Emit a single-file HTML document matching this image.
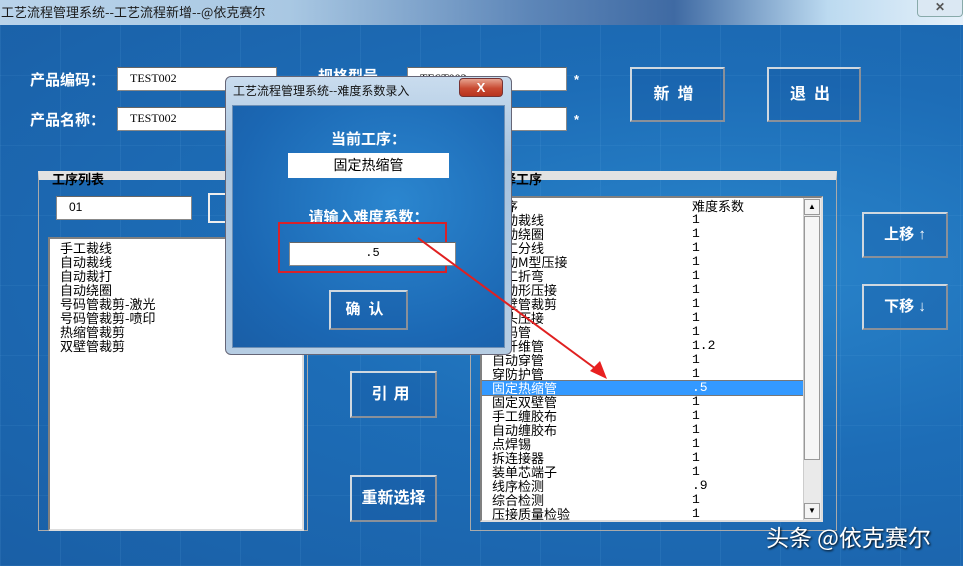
<!DOCTYPE html>
<html><head><meta charset="utf-8">
<style>
*{margin:0;padding:0;box-sizing:border-box}
body{width:963px;height:566px;overflow:hidden;position:relative;font-family:"Liberation Sans","Noto Sans CJK SC",sans-serif;
background:#1c68b2;}
.bg{position:absolute;left:0;top:25px;width:963px;height:541px;
background:
 repeating-linear-gradient(90deg,rgba(120,190,240,0.10) 0 1px,transparent 1px 60px),
 repeating-linear-gradient(0deg,rgba(120,190,240,0.08) 0 1px,transparent 1px 70px),
 radial-gradient(ellipse at 75% 45%,#2a86cc 0,#1d6db7 45%,#1a5fa6 100%);}
.a{position:absolute}
.title{left:0;top:0;width:963px;height:25px;background:linear-gradient(90deg,#b9d3ea 0,#a9c8e3 30%,#5d86b8 55%,#3f6aa3 70%,#bcdaf0 86%,#e6f1fa 100%);font-size:13px;line-height:23px;color:#1a1a1a;padding-left:1px;font-family:"Noto Sans CJK SC",sans-serif}
.close{left:917px;top:0;width:46px;height:17px;border:1px solid #8aa;border-top:none;border-radius:0 0 4px 4px;background:#dbe8f3;text-align:center;font-size:12px;line-height:15px;color:#555;font-weight:bold}
.lbl{color:#fff;font-weight:bold;font-size:15px}
.inp{background:#fff;border:1px solid #888;border-top-color:#666;font-size:12px;color:#000;padding-left:12px;line-height:21px;font-family:"Liberation Serif",serif}
.btn{border:2px solid #cfd8e0;border-right-color:#8a9099;border-bottom-color:#8a9099;color:#fff;font-weight:bold;text-align:center;font-size:16px;background:rgba(20,80,150,0.25)}
.list{background:#fff;border:2px solid #808080;border-right-color:#ddd;border-bottom-color:#ddd;font-family:"Noto Sans CJK SC",sans-serif;font-size:13px;line-height:14px;color:#000;overflow:hidden}
.grp{border:1px solid #aaa;border-top:9px solid #e2e2e2}
.row{height:14px;white-space:nowrap;position:relative;padding-left:10px}
.row span{position:absolute;left:210px;top:0;font-family:"Liberation Mono",monospace;font-size:13px}
.hl{background:#3399ff;color:#fff;outline:1px solid #777}
</style></head><body>
<div class="bg"></div>
<div class="a title">工艺流程管理系统--工艺流程新增--@依克赛尔</div>
<div class="a close">✕</div>

<div class="a lbl" style="left:30px;top:69px">产品编码：</div>
<div class="a lbl" style="left:30px;top:109px">产品名称：</div>
<div class="a inp" style="left:117px;top:67px;width:160px;height:24px">TEST002</div>
<div class="a inp" style="left:117px;top:107px;width:160px;height:24px">TEST002</div>
<div class="a lbl" style="left:318px;top:65px">规格型号</div>
<div class="a inp" style="left:407px;top:67px;width:160px;height:24px">TEST002</div>
<div class="a inp" style="left:407px;top:107px;width:160px;height:24px"></div>
<div class="a lbl" style="left:574px;top:72px;font-size:13px">*</div>
<div class="a lbl" style="left:574px;top:112px;font-size:13px">*</div>
<div class="a btn" style="left:630px;top:67px;width:95px;height:55px;line-height:51px;letter-spacing:8px">新增</div>
<div class="a btn" style="left:767px;top:67px;width:94px;height:55px;line-height:51px;letter-spacing:8px">退出</div>

<div class="a grp" style="left:38px;top:171px;width:270px;height:360px"></div>
<div class="a" style="left:52px;top:169px;font-size:13px;font-weight:bold;color:#000">工序列表</div>
<div class="a inp" style="left:56px;top:196px;width:136px;height:24px;font-family:'Liberation Sans',sans-serif">01</div>
<div class="a" style="left:208px;top:193px;width:20px;height:30px;border:2px solid #eee;border-right:none"></div>
<div class="a list" style="left:48px;top:237px;width:256px;height:294px;padding:2px 0 0 10px">手工裁线<br>自动裁线<br>自动裁打<br>自动绕圈<br>号码管裁剪-激光<br>号码管裁剪-喷印<br>热缩管裁剪<br>双壁管裁剪</div>

<div class="a btn" style="left:350px;top:371px;width:87px;height:47px;line-height:43px;letter-spacing:6px">引用</div>
<div class="a btn" style="left:350px;top:475px;width:87px;height:47px;line-height:43px">重新选择</div>

<div class="a grp" style="left:470px;top:171px;width:367px;height:360px"></div>
<div class="a" style="left:490px;top:169px;font-size:13px;font-weight:bold;color:#000">选择工序</div>
<div class="a list" style="left:480px;top:196px;width:343px;height:326px;padding-top:1px">
<div class="row">工序<span style="font-family:'Noto Sans CJK SC',sans-serif">难度系数</span></div>
<div class="row">自动裁线<span>1</span></div>
<div class="row">自动绕圈<span>1</span></div>
<div class="row">手工分线<span>1</span></div>
<div class="row">自动M型压接<span>1</span></div>
<div class="row">手工折弯<span>1</span></div>
<div class="row">自动形压接<span>1</span></div>
<div class="row">双壁管裁剪<span>1</span></div>
<div class="row">端头压接<span>1</span></div>
<div class="row">号码管<span>1</span></div>
<div class="row">剥纤维管<span>1.2</span></div>
<div class="row">自动穿管<span>1</span></div>
<div class="row">穿防护管<span>1</span></div>
<div class="row hl">固定热缩管<span>.5</span></div>
<div class="row">固定双壁管<span>1</span></div>
<div class="row">手工缠胶布<span>1</span></div>
<div class="row">自动缠胶布<span>1</span></div>
<div class="row">点焊锡<span>1</span></div>
<div class="row">拆连接器<span>1</span></div>
<div class="row">装单芯端子<span>1</span></div>
<div class="row">线序检测<span>.9</span></div>
<div class="row">综合检测<span>1</span></div>
<div class="row">压接质量检验<span>1</span></div>
</div>
<div class="a" style="left:803px;top:198px;width:18px;height:322px;background:#eaeaea;border-left:1px solid #ccc"></div>
<div class="a" style="left:804px;top:199px;width:16px;height:16px;background:#f4f4f4;border:1px solid #999;font-size:8px;text-align:center;line-height:14px">▲</div>
<div class="a" style="left:804px;top:216px;width:16px;height:244px;background:#f6f6f6;border:1px solid #999"></div>
<div class="a" style="left:804px;top:503px;width:16px;height:16px;background:#f4f4f4;border:1px solid #999;font-size:8px;text-align:center;line-height:14px">▼</div>

<div class="a btn" style="left:862px;top:212px;width:86px;height:46px;line-height:42px;font-size:15px">上移 ↑</div>
<div class="a btn" style="left:862px;top:284px;width:86px;height:46px;line-height:42px;font-size:15px">下移 ↓</div>

<!-- dialog -->
<div class="a" style="left:225px;top:76px;width:287px;height:279px;border:1px solid #667;border-radius:6px;background:linear-gradient(180deg,#c9dcee,#a7c3de 30%,#b6cde3);"></div>
<div class="a" style="left:233px;top:82px;font-size:12px;color:#111;font-family:'Noto Sans CJK SC',sans-serif">工艺流程管理系统--难度系数录入</div>
<div class="a" style="left:459px;top:78px;width:44px;height:19px;border:1px solid #733;border-radius:4px;background:linear-gradient(#e7a38f,#c84a32 55%,#b8341f);color:#fff;font-weight:bold;text-align:center;font-size:13px;line-height:17px">X</div>
<div class="a" style="left:232px;top:105px;width:273px;height:243px;border:1px solid #6d8fb5;background:radial-gradient(ellipse at 60% 40%,#2b86cf,#1b67b3 70%,#1a5ea6)"></div>
<div class="a lbl" style="left:232px;top:128px;width:273px;text-align:center">当前工序：</div>
<div class="a" style="left:288px;top:153px;width:161px;height:25px;background:#fff;text-align:center;font-size:14px;line-height:25px;font-family:'Noto Sans CJK SC',sans-serif">固定热缩管</div>
<div class="a lbl" style="left:232px;top:206px;width:273px;text-align:center">请输入难度系数：</div>
<div class="a" style="left:278px;top:222px;width:169px;height:51px;border:2px solid #d8222a"></div>
<div class="a inp" style="left:289px;top:242px;width:167px;height:24px;text-align:center;font-family:'Liberation Mono',monospace;padding:0">.5</div>
<div class="a btn" style="left:329px;top:290px;width:79px;height:40px;line-height:36px;letter-spacing:8px;font-size:15px">确认</div>

<svg class="a" style="left:0;top:0" width="963" height="566">
<line x1="418" y1="238" x2="600" y2="372" stroke="#e02020" stroke-width="2"/>
<polygon points="607,379 590,371 600,361" fill="#e82020"/>
</svg>
<div class="a" style="left:766px;top:519px;color:#fff;font-size:23px;font-family:'Noto Sans CJK SC',sans-serif;text-shadow:1px 1px 2px #000">头条 @依克赛尔</div>
</body></html>
